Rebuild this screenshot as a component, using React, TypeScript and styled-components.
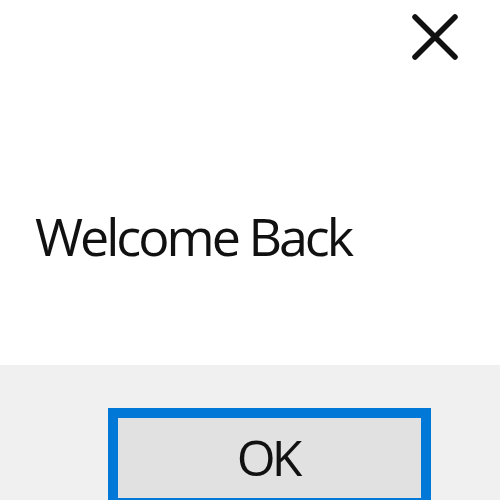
import React from "react";
import styled, { createGlobalStyle } from "styled-components";

const Global = createGlobalStyle`
  html, body { margin: 0; padding: 0; background: #ffffff; }
  body { width: 500px; height: 500px; overflow: hidden; }
`;

const Dialog = styled.div`
  width: 500px;
  height: 500px;
  display: flex;
  flex-direction: column;
  font-family: "Open Sans", "Noto Sans", sans-serif;
  color: #000;
  overflow: hidden;
`;

const TitleBar = styled.div`
  height: 76px;
  display: flex;
  justify-content: flex-end;
  align-items: flex-start;
  padding: 14px 42px 0 0;
  box-sizing: border-box;
  background: #ffffff;
`;

const CloseButton = styled.button`
  width: 46px;
  height: 46px;
  padding: 0;
  border: 0;
  background: transparent;
  display: flex;
  align-items: center;
  justify-content: center;
`;

const Body = styled.div`
  flex: 1;
  background: #ffffff;
  padding: 134px 0 0 35px;
  box-sizing: border-box;
`;

const Message = styled.div`
  font-size: 52px;
  font-weight: 500;
  line-height: 52px;
  letter-spacing: -3px;
  white-space: nowrap;
  color: #111;
`;

const Footer = styled.div`
  height: 135px;
  flex: none;
  background: #f0f0f0;
  padding: 43px 0 0 108px;
  box-sizing: border-box;
`;

const OkButton = styled.button`
  width: 323px;
  height: 100px;
  box-sizing: border-box;
  border: 10px solid #0078d7;
  background: #e1e1e1;
  font-family: inherit;
  font-size: 50px;
  font-weight: 500;
  letter-spacing: -4px;
  color: #111;
  padding: 14px 4px 0 0;
  display: flex;
  justify-content: center;
  align-items: flex-start;
  line-height: 50px;
`;

export default function App() {
  return (
    <>
      <Global />
      <Dialog>
        <TitleBar>
          <CloseButton aria-label="Close">
            <svg width="46" height="46" viewBox="0 0 46 46">
              <path d="M3 3 L43 43 M43 3 L3 43" stroke="#111" strokeWidth="5.5" strokeLinecap="round" />
            </svg>
          </CloseButton>
        </TitleBar>
        <Body>
          <Message>Welcome Back</Message>
        </Body>
        <Footer>
          <OkButton>OK</OkButton>
        </Footer>
      </Dialog>
    </>
  );
}
